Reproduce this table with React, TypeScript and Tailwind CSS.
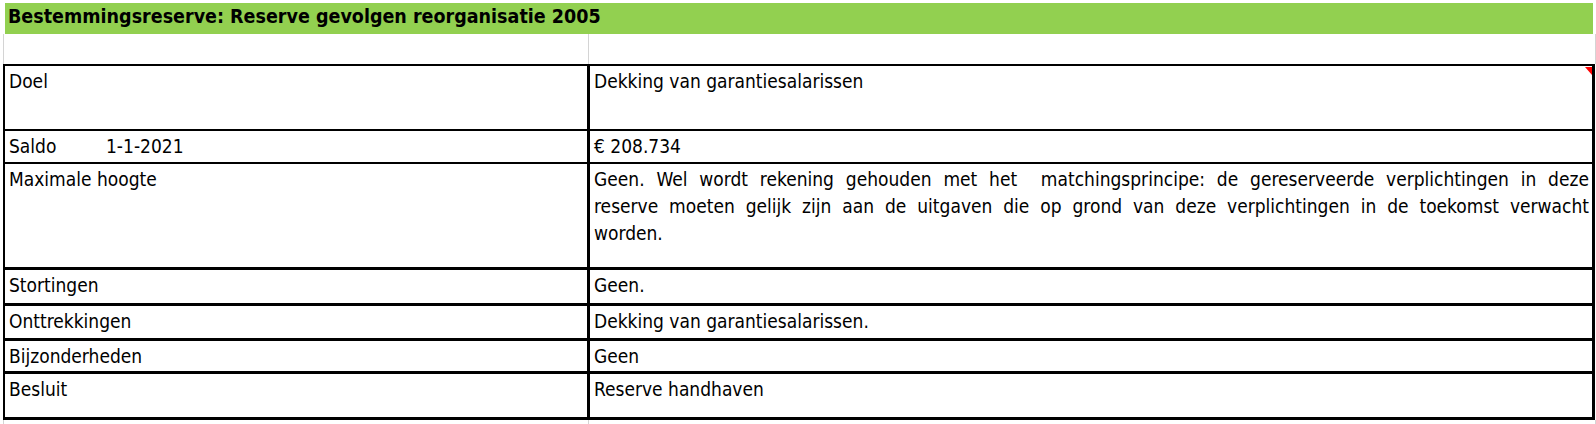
const font = "font-['DejaVu_Sans_Condensed','DejaVu_Sans',sans-serif]";

type Row = {
  label: React.ReactNode;
  value: React.ReactNode;
  h: string;
  border: string;
  comment?: boolean;
};

// heights include the bottom border (border-box)
const rows: Row[] = [
  {
    label: "Doel",
    value: "Dekking van garantiesalarissen",
    h: "h-[65px]",
    border: "border-b-2",
    comment: true,
  },
  {
    label: (
      <>
        <span className="inline-block w-[97px]">Saldo</span>1-1-2021
      </>
    ),
    value: "€ 208.734",
    h: "h-[33px]",
    border: "border-b-2",
  },
  {
    label: "Maximale hoogte",
    value: (
      <div className="leading-[27px] pt-[2px] pr-[3px]">
        <div className="text-justify [text-align-last:justify] whitespace-pre">
          {"Geen. Wel wordt rekening gehouden met het  matchingsprincipe: de gereserveerde verplichtingen in deze"}
        </div>
        <div className="text-justify [text-align-last:justify]">
          reserve moeten gelijk zijn aan de uitgaven die op grond van deze verplichtingen in de toekomst verwacht
        </div>
        <div>worden.</div>
      </div>
    ),
    h: "h-[106px]",
    border: "border-b-[3px]",
  },
  { label: "Stortingen", value: "Geen.", h: "h-[36px]", border: "border-b-[3px]" },
  {
    label: "Onttrekkingen",
    value: "Dekking van garantiesalarissen.",
    h: "h-[35px]",
    border: "border-b-[3px]",
  },
  { label: "Bijzonderheden", value: "Geen", h: "h-[33px]", border: "border-b-[3px]" },
  { label: "Besluit", value: "Reserve handhaven", h: "h-[46px]", border: "border-b-[3px]" },
];

export default function App() {
  return (
    <div className={`w-[1596px] h-[424px] bg-white text-black text-[19px] ${font}`}>
      {/* Title bar */}
      <div className="pt-[3px] pl-[5px] pr-[3px]">
        <div className="h-[31px] bg-[#92d050] pl-[3px] font-bold text-[19.5px] leading-[28px]">
          Bestemmingsreserve: Reserve gevolgen reorganisatie 2005
        </div>
      </div>

      {/* Empty spacer row with gridlines */}
      <div className="flex h-[30px] ml-[3px] w-[1593px] border-l border-r border-[#d4d4d4]">
        <div className="w-[585px] border-r border-[#d4d4d4]" />
        <div className="flex-1" />
      </div>

      {/* Table */}
      <div className="ml-[3px] w-[1592px] border-t-2 border-l-2 border-r-[3px] border-black">
        {rows.map((r, i) => (
          <div key={i} className={`flex ${r.h} ${r.border} border-black`}>
            <div className="w-[585px] shrink-0 border-r-[3px] border-black pl-[4px] pt-[2px] leading-[27px]">
              {r.label}
            </div>
            <div className="relative flex-1 pl-[4px] pt-[2px] leading-[27px]">
              {typeof r.value === "string" ? r.value : <div className="-mt-[2px]">{r.value}</div>}
              {r.comment && (
                <svg className="absolute right-0 top-[1px]" width="7" height="8" viewBox="0 0 7 8">
                  <polygon points="0,0 7,0 7,8" fill="#ff0000" />
                </svg>
              )}
            </div>
          </div>
        ))}
      </div>

      {/* Gridline stub below table */}
      <div className="flex h-[4px] ml-[3px] w-[1593px] border-l border-r border-[#d4d4d4]">
        <div className="w-[585px] border-r border-[#d4d4d4]" />
      </div>
    </div>
  );
}
